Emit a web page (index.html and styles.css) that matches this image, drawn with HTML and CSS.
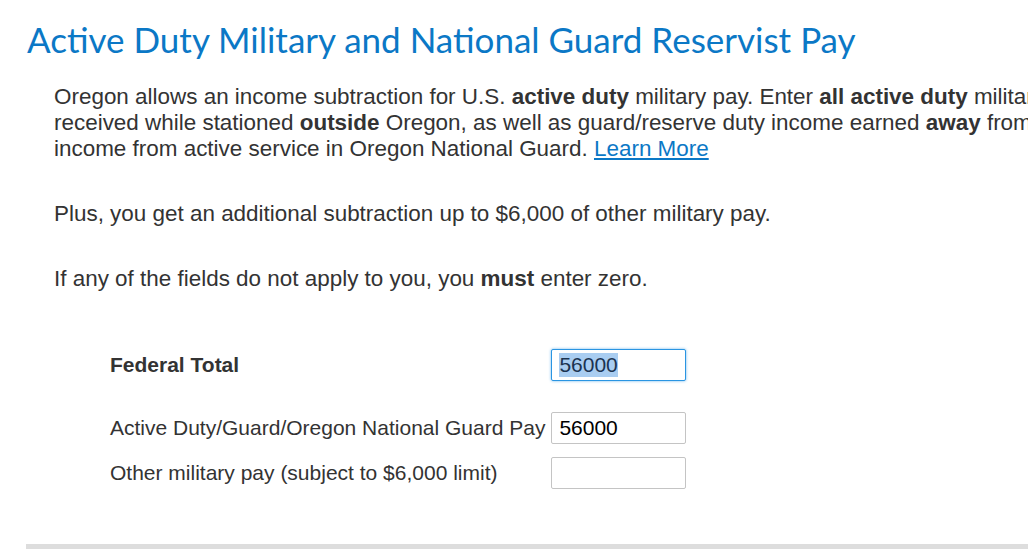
FILE: index.html
```html
<!DOCTYPE html>
<html lang="en">
<head>
    <meta charset="UTF-8">
    <meta name="viewport" content="width=device-width, initial-scale=1.0">
    <title>Active Duty Military Pay</title>
    <link rel="stylesheet" href="styles.css">
</head>
<body>
    <div class="page">
        <h1 class="page-title">Active Duty Military and National Guard Reservist Pay</h1>

        <div class="intro">
            <p>Oregon allows an income subtraction for U.S. <b>active duty</b> military pay. Enter <b>all active duty</b> military pay received while stationed <b>outside</b> Oregon, as well as guard/reserve duty income earned <b>away</b> from home, and income from active service in Oregon National Guard. <a href="#">Learn More</a></p>
            <p>Plus, you get an additional subtraction up to $6,000 of other military pay.</p>
            <p>If any of the fields do not apply to you, you <b>must</b> enter zero.</p>
        </div>

        <table class="pay-form">
            <tr class="total-row">
                <td class="label"><b>Federal Total</b></td>
                <td><input type="text" id="federalTotal" class="field is-active" value="56000"></td>
            </tr>
            <tr>
                <td class="label">Active Duty/Guard/Oregon National Guard Pay</td>
                <td><input type="text" class="field" value="56000"></td>
            </tr>
            <tr>
                <td class="label">Other military pay (subject to $6,000 limit)</td>
                <td><input type="text" class="field" value=""></td>
            </tr>
        </table>

        <div class="footer-bar"></div>
    </div>

    <script>
        // focus the total and select its value
        document.addEventListener('DOMContentLoaded', () => {
            const total = document.getElementById('federalTotal');
            total.focus();
            total.select();
        });
    </script>
</body>
</html>
```

FILE: styles.css
```css
* { margin: 0; padding: 0; box-sizing: border-box; }
html, body { overflow: hidden; }
body { font-family: "Liberation Sans", Arial, sans-serif; background: #fff; color: #333; }
.page { width: 1200px; padding: 17px 0 0 27px; }
.page-title { font-family: Lato, "Open Sans", sans-serif; font-weight: 400; font-size: 35px; line-height: 44px; color: #0b78c6; }
.intro { padding: 23px 0 0 27px; width: 1147px; font-size: 22.45px; line-height: 26px; }
.intro p { margin-bottom: 39px; }
.intro a { color: #0b78c6; }
.pay-form { margin: 56px 0 0 83px; border-collapse: collapse; font-size: 21px; }
.pay-form td { padding: 0; height: 45px; vertical-align: middle; }
.pay-form .label { padding-right: 6px; }
.pay-form .total-row td { height: 57px; vertical-align: top; line-height: 34px; }
.pay-form .total-row .field { margin-top: 1px; }
.field { display: block; width: 135px; height: 32px; padding: 0 7px; border: 1px solid #c4c4c4; border-radius: 2px; font-family: "Liberation Sans", Arial, sans-serif; font-size: 21px; color: #000; }
.field.is-active { border-color: #2a95e2; box-shadow: 0 0 3px #6bb6ec; outline: none; color: #1b3350; }
.field::selection { background: #a9cdf1; }
.footer-bar { margin: 49px 0 0 -1px; height: 6px; background: #ddd; }
```
